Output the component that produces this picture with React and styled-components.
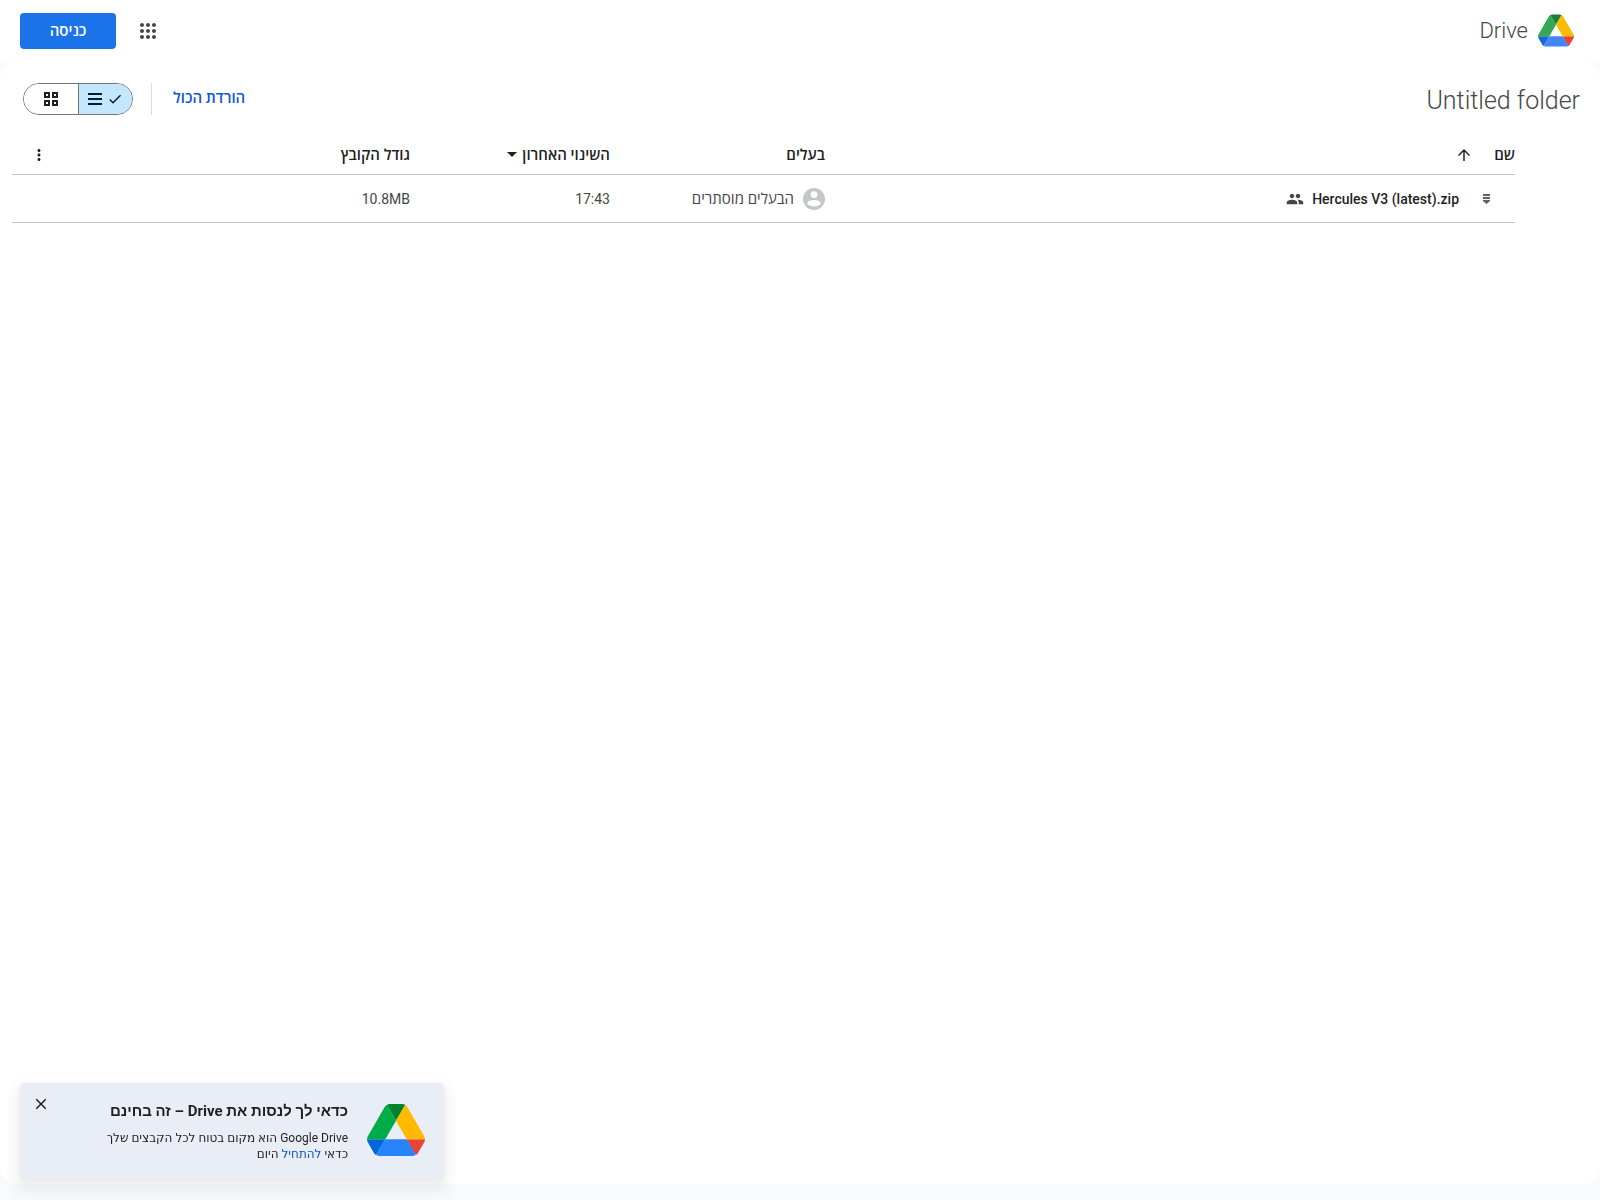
import React, { useState } from "react";
import styled, { createGlobalStyle } from "styled-components";

const GlobalStyle = createGlobalStyle`
  * { box-sizing: border-box; }
  body {
    margin: 0;
    background: #f8fafd;
    color: #1f1f1f;
    font-family: Roboto, "Open Sans", "Noto Sans", sans-serif;
  }
  button { font: inherit; color: inherit; cursor: pointer; }
`;

const Page = styled.div`
  display: flex;
  flex-direction: column;
  min-height: 100vh;
  padding-bottom: 16px;
`;

const Header = styled.header`
  display: flex;
  align-items: center;
  justify-content: space-between;
  height: 63px;
  padding: 0 26px 2px 20px;
  background: #fff;
`;

const Brand = styled.a`
  display: flex;
  align-items: center;
  gap: 10px;
  color: #444746;
  font-size: 22px;
  font-weight: 350;
  line-height: 28px;
  text-decoration: none;
`;

const HeaderActions = styled.div`
  display: flex;
  align-items: center;
  gap: 20px;
`;

const IconButton = styled.button`
  display: grid;
  place-items: center;
  width: ${(p) => p.$size}px;
  height: ${(p) => p.$size}px;
  padding: 0;
  border: 0;
  background: none;
  color: ${(p) => p.$color || "#1f1f1f"};
`;

const SignIn = styled.button`
  width: 96px;
  height: 36px;
  padding: 0 0 2px;
  border: 0;
  border-radius: 4px;
  background: #1a73e8;
  color: #fff;
  font-size: 15px;
  font-weight: 600;
`;

const Main = styled.main`
  flex: 1;
  padding-left: 12px;
  border-radius: 16px;
  background: #fff;
`;

const Toolbar = styled.div`
  display: flex;
  align-items: center;
  justify-content: space-between;
  height: 72px;
  padding: 0 20px 0 11px;
`;

const FolderTitle = styled.h1`
  margin: 0;
  padding-top: 4px;
  color: #444746;
  font-size: 25px;
  font-weight: 350;
  line-height: 32px;
`;

const Tools = styled.div`
  display: flex;
  align-items: center;
  gap: 18px;
`;

const DownloadAll = styled.button`
  padding: 0 3px 2px;
  border: 0;
  background: none;
  color: #0b57d0;
  font-size: 15px;
  font-weight: 600;
  line-height: 32px;
`;

const Divider = styled.span`
  width: 1px;
  height: 32px;
  background: #dadce0;
`;

const ViewSwitch = styled.div`
  display: flex;
  width: 110px;
  height: 32px;
  overflow: hidden;
  border: 1px solid #747775;
  border-radius: 16px;
`;

const ViewOption = styled.button`
  display: flex;
  flex: 1;
  align-items: center;
  justify-content: center;
  gap: 5px;
  padding: 0;
  border: 0;
  background: ${(p) => (p.$active ? "#c2e7ff" : "#fff")};
  color: ${(p) => (p.$active ? "#001d35" : "#1f1f1f")};
  & + & { border-right: 1px solid #747775; }
`;

const TableArea = styled.div`
  padding-right: 85px;
`;

const FileTable = styled.table`
  width: 100%;
  border-collapse: separate;
  border-spacing: 0;
  table-layout: fixed;
`;

const Col = styled.col`
  width: ${(p) => p.$width};
`;

const HeadCell = styled.th`
  height: 40px;
  padding: 0;
  border-bottom: 1px solid #c7c7c7;
  font-size: 15px;
  font-weight: 600;
  line-height: 20px;
  text-align: start;
`;

const Cell = styled.td`
  height: 48px;
  padding: 0;
  border-bottom: 1px solid #c7c7c7;
  color: #444746;
  font-size: 14px;
  line-height: 20px;
`;

const Inline = styled.div`
  display: flex;
  align-items: center;
  gap: ${(p) => p.$gap}px;
  padding-inline-start: ${(p) => p.$indent || 0}px;
`;

const FileName = styled.span`
  color: #1f1f1f;
  font-weight: 500;
`;

const OwnerName = styled.span`
  font-size: 15px;
`;

const Toast = styled.aside`
  position: fixed;
  bottom: 20px;
  left: 20px;
  display: flex;
  align-items: flex-start;
  gap: 19px;
  width: 424px;
  padding: 16px 19px 18px;
  border-radius: 4px;
  background: #e9eef6;
  box-shadow: 0 8px 12px 6px rgba(60, 64, 67, 0.06), 0 2px 8px rgba(60, 64, 67, 0.05);
`;

const ToastLogo = styled.div`
  display: flex;
  padding-top: 5px;
`;

const ToastText = styled.div`
  flex: 1;
`;

const ToastTitle = styled.h2`
  margin: 0 0 7px;
  font-family: Roboto, "Liberation Sans", sans-serif;
  font-size: 15px;
  font-weight: 700;
  line-height: 24px;
`;

const ToastBody = styled.p`
  margin: 0;
  font-family: Roboto, "DejaVu Sans", sans-serif;
  font-size: 12px;
  line-height: 16px;
`;

const ToastLink = styled.a`
  color: #0b57d0;
  text-decoration: none;
`;

const CloseSlot = styled.div`
  position: absolute;
  top: 9px;
  left: 9px;
`;

const BRAND_SOFT = ["#1967d2", "#34a853", "#ea4335", "#188038", "#4285f4", "#fbbc04"];
const BRAND_VIVID = ["#0066da", "#00ac47", "#ea4335", "#00832d", "#2684fc", "#ffba00"];

function DriveLogo({ width, height, colors }) {
  return (
    <svg width={width} height={height} viewBox="0 0 87.3 78" aria-hidden="true">
      <path fill={colors[0]} d="m6.6 66.85 3.85 6.65c.8 1.4 1.95 2.5 3.3 3.3l13.75-23.8h-27.5c0 1.55.4 3.1 1.2 4.5z" />
      <path fill={colors[1]} d="m43.65 25-13.75-23.8c-1.35.8-2.5 1.9-3.3 3.3l-25.4 44a9.06 9.06 0 0 0-1.2 4.5h27.5z" />
      <path fill={colors[2]} d="m73.55 76.8c1.35-.8 2.5-1.9 3.3-3.3l1.6-2.75 7.65-13.25c.8-1.4 1.2-2.95 1.2-4.5h-27.502l5.852 11.5z" />
      <path fill={colors[3]} d="m43.65 25 13.75-23.8c-1.35-.8-2.9-1.2-4.5-1.2h-18.5c-1.6 0-3.15.45-4.5 1.2z" />
      <path fill={colors[4]} d="m59.8 53h-32.3l-13.75 23.8c1.35.8 2.9 1.2 4.5 1.2h50.8c1.6 0 3.15-.45 4.5-1.2z" />
      <path fill={colors[5]} d="m73.4 26.5-12.7-22c-.8-1.4-1.95-2.5-3.3-3.3l-13.75 23.8 16.15 28h27.45c0-1.55-.4-3.1-1.2-4.5z" />
    </svg>
  );
}

function Icon({ d, size = 24 }) {
  return (
    <svg width={size} height={size} viewBox="0 0 24 24" fill="currentColor" aria-hidden="true">
      <path d={d} />
    </svg>
  );
}

const ICONS = {
  apps: "M6 8c1.1 0 2-.9 2-2s-.9-2-2-2-2 .9-2 2 .9 2 2 2zm6 12c1.1 0 2-.9 2-2s-.9-2-2-2-2 .9-2 2 .9 2 2 2zm-6 0c1.1 0 2-.9 2-2s-.9-2-2-2-2 .9-2 2 .9 2 2 2zm0-6c1.1 0 2-.9 2-2s-.9-2-2-2-2 .9-2 2 .9 2 2 2zm6 0c1.1 0 2-.9 2-2s-.9-2-2-2-2 .9-2 2 .9 2 2 2zm4-8c0 1.1.9 2 2 2s2-.9 2-2-.9-2-2-2-2 .9-2 2zm-4 2c1.1 0 2-.9 2-2s-.9-2-2-2-2 .9-2 2 .9 2 2 2zm6 6c1.1 0 2-.9 2-2s-.9-2-2-2-2 .9-2 2 .9 2 2 2zm0 6c1.1 0 2-.9 2-2s-.9-2-2-2-2 .9-2 2 .9 2 2 2z",
  check: "M9 16.17 4.83 12l-1.42 1.41L9 19 21 7l-1.41-1.41z",
  list: "M0 0h14v2H0zM0 5h14v2H0zM0 10h14v2H0z",
  grid: "M0 0h6v6H0zM2 2v2h2V2zM8 0h6v6H8zM10 2v2h2V2zM0 8h6v6H0zM2 10v2h2v-2zM8 8h6v6H8zM10 10v2h2v-2z",
  more: "M12 8c1.1 0 2-.9 2-2s-.9-2-2-2-2 .9-2 2 .9 2 2 2zm0 2c-1.1 0-2 .9-2 2s.9 2 2 2 2-.9 2-2-.9-2-2-2zm0 6c-1.1 0-2 .9-2 2s.9 2 2 2 2-.9 2-2-.9-2-2-2z",
  up: "m4 12 1.41 1.41L11 7.83V20h2V7.83l5.58 5.59L20 12l-8-8-8 8z",
  group: "M16 11c1.66 0 2.99-1.34 2.99-3S17.66 5 16 5s-3 1.34-3 3 1.34 3 3 3zm-8 0c1.66 0 2.99-1.34 2.99-3S9.66 5 8 5 5 6.34 5 8s1.34 3 3 3zm0 2c-2.33 0-7 1.17-7 3.5V19h14v-2.5c0-2.33-4.67-3.5-7-3.5zm8 0c-.29 0-.62.02-.97.05 1.16.84 1.97 1.97 1.97 3.45V19h6v-2.5c0-2.33-4.67-3.5-7-3.5z",
  archive: "M0 0h7v2H0zM0 3h7v2H0zM0 6h7v1L3.500 10 0 7z",
  close: "M19 6.41 17.59 5 12 10.59 6.41 5 5 6.41 10.59 12 5 17.59 6.41 19 12 13.410 17.59 19 19 17.59 13.41 12z",
};

function Avatar() {
  return (
    <svg width="22" height="22" viewBox="0 0 22 22" aria-hidden="true">
      <circle cx="11" cy="11" r="11" fill="#c4c7c5" />
      <circle cx="11" cy="6.600" r="3.400" fill="#fff" />
      <ellipse cx="11" cy="15.200" rx="6.600" ry="3.300" fill="#fff" />
    </svg>
  );
}

export default function App() {
  const [view, setView] = useState("list");
  const [toastOpen, setToastOpen] = useState(true);

  return (
    <Page dir="rtl" lang="he">
      <GlobalStyle />
      <Header>
        <Brand href="#">
          <DriveLogo width={36} height={33} colors={BRAND_SOFT} />
          Drive
        </Brand>
        <HeaderActions>
          <IconButton $size={24} $color="#444746" aria-label="Google Apps">
            <Icon d={ICONS.apps} />
          </IconButton>
          <SignIn>כניסה</SignIn>
        </HeaderActions>
      </Header>

      <Main>
        <Toolbar>
          <FolderTitle>Untitled folder</FolderTitle>
          <Tools>
            <DownloadAll>הורדת הכול</DownloadAll>
            <Divider />
            <ViewSwitch role="group">
              <ViewOption $active={view === "list"} aria-label="List" aria-pressed={view === "list"} onClick={() => setView("list")}>
                <Icon d={ICONS.check} size={16} />
                <svg width="14" height="12" viewBox="0 0 14 12" fill="currentColor" aria-hidden="true">
                  <path d={ICONS.list} />
                </svg>
              </ViewOption>
              <ViewOption $active={view === "grid"} aria-label="Grid" aria-pressed={view === "grid"} onClick={() => setView("grid")}>
                <svg width="14" height="14" viewBox="0 0 14 14" fill="currentColor" fillRule="evenodd" aria-hidden="true">
                  <path d={ICONS.grid} />
                </svg>
              </ViewOption>
            </ViewSwitch>
          </Tools>
        </Toolbar>

        <TableArea>
          <FileTable>
            <colgroup>
              <Col $width="auto" />
              <Col $width="215px" />
              <Col $width="200px" />
              <Col $width="346px" />
              <Col $width="52px" />
            </colgroup>
            <thead>
              <tr>
                <HeadCell scope="col">
                  <Inline $gap={21}>
                    שם
                    <IconButton $size={18} aria-label="Sort">
                      <Icon d={ICONS.up} size={18} />
                    </IconButton>
                  </Inline>
                </HeadCell>
                <HeadCell scope="col">בעלים</HeadCell>
                <HeadCell scope="col">
                  <Inline $gap={5}>
                    השינוי האחרון
                    <svg width="10" height="5" viewBox="0 0 10 5" fill="currentColor" aria-hidden="true">
                      <path d="M0 0h10L5 5z" />
                    </svg>
                  </Inline>
                </HeadCell>
                <HeadCell scope="col">גודל הקובץ</HeadCell>
                <HeadCell scope="col">
                  <Inline $indent={16}>
                    <IconButton $size={18} aria-label="More">
                      <Icon d={ICONS.more} size={18} />
                    </IconButton>
                  </Inline>
                </HeadCell>
              </tr>
            </thead>
            <tbody>
              <tr>
                <Cell>
                  <Inline $gap={8} $indent={25}>
                    <Inline $gap={24}>
                      <svg width="7" height="10" viewBox="0 0 7 10" fill="#5f6368" aria-hidden="true">
                        <path d={ICONS.archive} />
                      </svg>
                      <FileName dir="ltr">Hercules V3 (latest).zip</FileName>
                    </Inline>
                    <Icon d={ICONS.group} size={18} />
                  </Inline>
                </Cell>
                <Cell>
                  <Inline $gap={9}>
                    <Avatar />
                    <OwnerName>הבעלים מוסתרים</OwnerName>
                  </Inline>
                </Cell>
                <Cell>17:43</Cell>
                <Cell><bdi>10.8MB</bdi></Cell>
                <Cell />
              </tr>
            </tbody>
          </FileTable>
        </TableArea>
      </Main>

      {toastOpen && (
        <Toast>
          <ToastLogo>
            <DriveLogo width={58} height={52} colors={BRAND_VIVID} />
          </ToastLogo>
          <ToastText>
            <ToastTitle>כדאי לך לנסות את Drive – זה בחינם</ToastTitle>
            <ToastBody>
              Google Drive הוא מקום בטוח לכל הקבצים שלך
              <br />
              כדאי <ToastLink href="#">להתחיל</ToastLink> היום
            </ToastBody>
          </ToastText>
          <CloseSlot>
            <IconButton $size={24} aria-label="Close" onClick={() => setToastOpen(false)}>
              <Icon d={ICONS.close} size={18} />
            </IconButton>
          </CloseSlot>
        </Toast>
      )}
    </Page>
  );
}
